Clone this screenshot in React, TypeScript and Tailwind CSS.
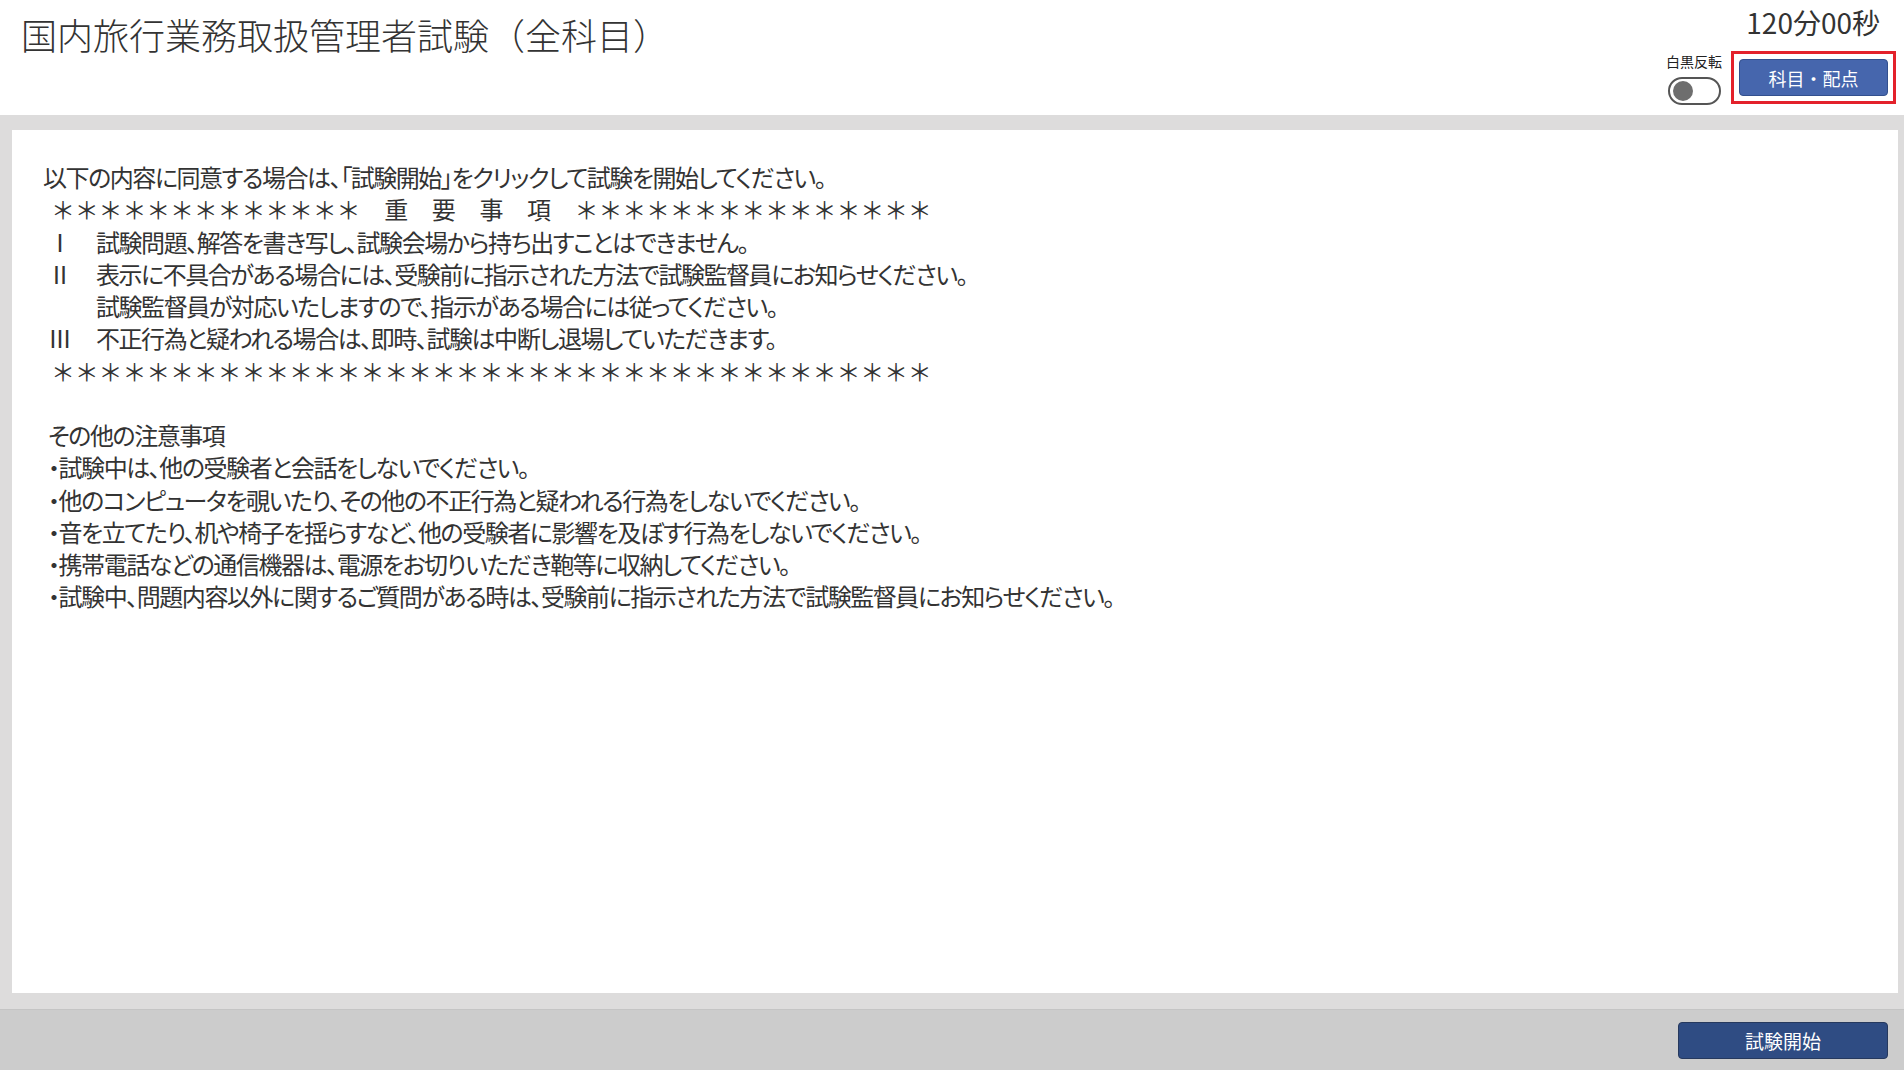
import { FC } from "react";

const font = "[font-family:'Noto_Sans_CJK_JP','Noto_Sans',sans-serif]";
const palt = "[font-feature-settings:'palt'] tracking-[-1.45px]";

const STARS_TOP =
  "＊＊＊＊＊＊＊＊＊＊＊＊＊　重　要　事　項　＊＊＊＊＊＊＊＊＊＊＊＊＊＊＊";
const STARS_BOTTOM = "＊".repeat(37);

const notes = [
  "・試験中は、他の受験者と会話をしないでください。",
  "・他のコンピュータを覗いたり、その他の不正行為と疑われる行為をしないでください。",
  "・音を立てたり、机や椅子を揺らすなど、他の受験者に影響を及ぼす行為をしないでください。",
  "・携帯電話などの通信機器は、電源をお切りいただき鞄等に収納してください。",
  "・試験中、問題内容以外に関するご質問がある時は、受験前に指示された方法で試験監督員にお知らせください。",
];

const Numbered: FC<{ n: string; children: React.ReactNode }> = ({ n, children }) => (
  <div className="flex">
    <span className="w-[24px] text-center">{n}</span>
    <span className={`pl-[24px] ${palt}`}>{children}</span>
  </div>
);

export default function App() {
  return (
    <div className={`flex flex-col h-[1070px] w-full bg-white text-[#333333] ${font}`}>
      {/* header */}
      <header className="h-[115px] flex justify-between bg-white">
        <h1 className="pl-[21px] pt-[12px] text-[36px] leading-[44px] font-light">
          国内旅行業務取扱管理者試験（全科目）
        </h1>
        <div className="flex flex-col items-end pr-[8px]">
          <div className="pt-[5px] pr-[16px] text-[28px] leading-[34px] [font-feature-settings:'palt']">120分00秒</div>
          <div className="flex items-start mt-[12px] gap-[9px]">
            <div className="flex flex-col items-center">
              <span className="text-[14px] leading-[20px] text-[#222]">白黒反転</span>
              <button className="mt-[6px] w-[53px] h-[28px] rounded-full border-2 border-[#555] bg-white flex items-center pl-[3px]">
                <span className="w-[20px] h-[20px] rounded-full bg-[#6e6e6e]" />
              </button>
            </div>
            <div className="border-[3px] border-[#e3212b] p-[5px]">
              <button className="w-[149px] h-[37px] rounded-[4px] bg-[#4666ad] border border-[#33508e] text-white text-[18px] leading-none">
                科目・配点
              </button>
            </div>
          </div>
        </div>
      </header>

      {/* body */}
      <main className="flex-1 flex bg-[#dddcdc] pt-[15px] pl-[12px] pr-[6px] pb-[16px]">
        <div className="flex-1 bg-white pt-[31px] pl-[36px] text-[24px] leading-[32.25px]">
          <div className={`-ml-[5px] ${palt}`}>
            以下の内容に同意する場合は、「試験開始」をクリックして試験を開始してください。
          </div>
          <div className="pl-[3px] tracking-[-0.2px]">{STARS_TOP}</div>
          <Numbered n="Ⅰ">試験問題、解答を書き写し、試験会場から持ち出すことはできません。</Numbered>
          <Numbered n="Ⅱ">表示に不具合がある場合には、受験前に指示された方法で試験監督員にお知らせください。</Numbered>
          <div className={`pl-[48px] ${palt}`}>
            試験監督員が対応いたしますので、指示がある場合には従ってください。
          </div>
          <Numbered n="Ⅲ">不正行為と疑われる場合は、即時、試験は中断し退場していただきます。</Numbered>
          <div className="pl-[3px] tracking-[-0.2px]">{STARS_BOTTOM}</div>
          <div className="h-[32.25px]" />
          <div className={palt}>その他の注意事項</div>
          {notes.map((t) => (
            <div key={t} className={palt}>
              {t}
            </div>
          ))}
        </div>
      </main>

      {/* footer */}
      <footer className="h-[61px] bg-[#cccccc] border-t border-[#c4c4c4] flex items-center justify-end pr-[16px]">
        <button className="w-[210px] h-[37px] rounded-[4px] bg-[#2f4c83] border border-[#26395e] text-white text-[19px] leading-none">
          試験開始
        </button>
      </footer>
    </div>
  );
}
